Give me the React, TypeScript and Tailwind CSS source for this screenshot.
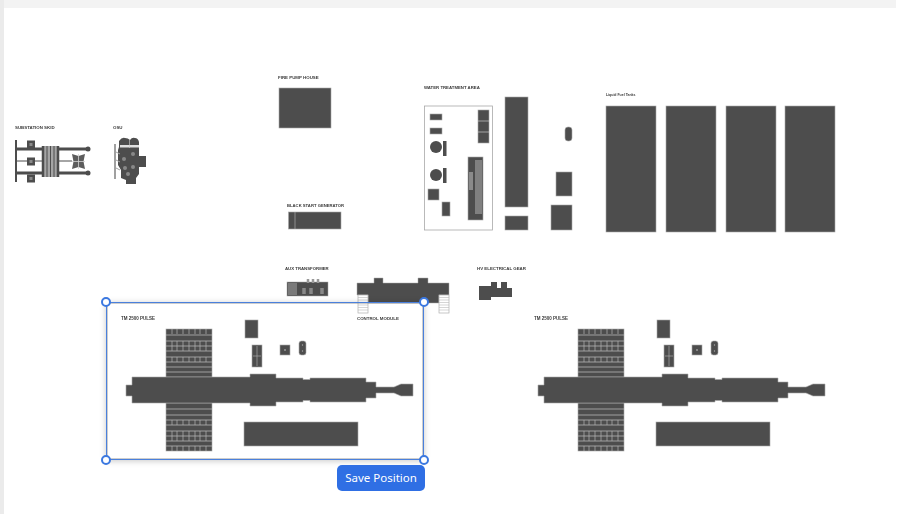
const DARK = '#4d4d4d';
const EDGE = '#a8a8a8';

const labels = [
  { text: 'SUBSTATION SKID', x: 15, y: 125.5, size: 'text-[4.4px]' },
  { text: 'OSU', x: 113, y: 125.5, size: 'text-[4.4px]' },
  { text: 'FIRE PUMP HOUSE', x: 278, y: 75.5, size: 'text-[4.4px]' },
  { text: 'BLACK START GENERATOR', x: 287, y: 203.5, size: 'text-[4.2px]' },
  { text: 'WATER TREATMENT AREA', x: 424, y: 85.5, size: 'text-[4.3px]' },
  { text: 'Liquid Fuel Tanks', x: 606, y: 93.5, size: 'text-[3.5px]' },
  { text: 'AUX TRANSFORMER', x: 285, y: 266.5, size: 'text-[4.3px]' },
  { text: 'HV ELECTRICAL GEAR', x: 477, y: 266.5, size: 'text-[4.4px]' },
  { text: 'CONTROL MODULE', x: 357, y: 316.5, size: 'text-[4.4px]' },
  { text: 'TM 2500 PULSE', x: 121, y: 316.5, size: 'text-[4.5px]' },
  { text: 'TM 2500 PULSE', x: 534, y: 316.5, size: 'text-[4.5px]' },
];

function Box({ x, y, w, h }: { x: number; y: number; w: number; h: number }) {
  return <rect x={x} y={y} width={w} height={h} fill={DARK} stroke={EDGE} strokeWidth={0.6} />;
}

function Fins({ y, cellRows }: { y: number; cellRows: number[] }) {
  return (
    <g>
      <rect x={166} y={y} width={46} height={48} fill={DARK} stroke={EDGE} strokeWidth={0.6} />
      {[6, 12, 17, 22, 28, 33, 38, 43].map((r) => (
        <line key={r} x1={166} x2={212} y1={y + r} y2={y + r} stroke="#b5b5b5" strokeWidth={0.8} />
      ))}
      {cellRows.map((r) =>
        [172, 177, 183, 189, 195, 200, 206].map((cx) => (
          <line key={`${r}-${cx}`} x1={cx} x2={cx} y1={y + r} y2={y + r + 5} stroke="#b5b5b5" strokeWidth={0.7} />
        )),
      )}
    </g>
  );
}

function Pulse({ dx }: { dx: number }) {
  return (
    <g transform={`translate(${dx} 0)`}>
      <Fins y={329} cellRows={[0, 12, 17, 28]} />
      <Fins y={403} cellRows={[17, 28, 33, 43]} />
      <path
        d="M126 385H132V377H250V374H276V378H303V379.500H310V378H366V382H376V387H394L401 384H413V396H401L394 393H376V398H366V402H310V400.500H303V402H276V406H250V403H132V396H126Z"
        fill={DARK}
        stroke={EDGE}
        strokeWidth={0.6}
      />
      <Box x={244} y={422} w={114} h={24} />
      <Box x={245} y={320} w={13} h={18} />
      <Box x={252} y={345} w={10} h={22} />
      <path d="M257 346V366M253 356H261" stroke="#b5b5b5" strokeWidth={0.6} />
      <Box x={280} y={345} w={10} h={10} />
      <circle cx={285} cy={350} r={1} fill="#999" />
      <rect x={299} y={341} width={7} height={14} rx={2.500} fill={DARK} stroke={EDGE} strokeWidth={0.6} />
      <circle cx={302.500} cy={345} r={0.7} fill="#aaa" />
      <circle cx={302.500} cy={351} r={0.7} fill="#aaa" />
    </g>
  );
}

function Substation() {
  return (
    <g>
      <path d="M16 149H88M16 173H88" stroke={DARK} strokeWidth={3} />
      <path d="M16 161H72" stroke={DARK} strokeWidth={1} />
      <path d="M16 140V182" stroke={DARK} strokeWidth={2} />
      <circle cx={88} cy={149} r={2.500} fill={DARK} />
      <circle cx={88} cy={173} r={2.500} fill={DARK} />
      {[140.500, 157.500, 174.500].map((y) => (
        <g key={y}>
          <rect x={27} y={y} width={8} height={8} fill={DARK} />
          <rect x={29.500} y={y + 2.500} width={3} height={3} fill="#8a8a8a" />
        </g>
      ))}
      <rect x={42} y={146} width={17} height={31} fill="#a5a5a5" />
      <path d="M43 146V177M58 146V177" stroke={DARK} strokeWidth={2.500} />
      {[47, 50.500, 54].map((x) => (
        <line key={x} x1={x} x2={x} y1={146} y2={177} stroke={DARK} strokeWidth={1} />
      ))}
      <path d="M72 154L78.500 156L85 154L83.500 161.500L85 169L78.500 167L72 169L73.500 161.500Z" fill="#5c5c5c" />
      <path d="M78.500 154V169M72 161.500H85" stroke="#d0d0d0" strokeWidth={0.8} />
    </g>
  );
}

function Osu() {
  return (
    <g>
      <rect x={114} y={144} width={2} height={35} fill="#a0a0a0" />
      <path
        d="M119 141Q122 137 125 138Q128 138 130 140Q132 137 135 138Q138 138 139 142V156H146V167H139V174L136 178V184H126V180L121 178V170L118 165V150L119 147Z"
        fill={DARK}
      />
      <rect x={120} y={145} width={19} height={2.500} fill="#e0e0e0" />
      <line x1={129.500} x2={129.500} y1={140} y2={148} stroke="#cfcfcf" strokeWidth={0.6} />
      {[
        [124, 159],
        [133, 154],
        [125, 168],
        [133, 167],
        [128, 174],
      ].map(([cx, cy]) => (
        <circle key={`${cx}-${cy}`} cx={cx} cy={cy} r={2} fill="#888" />
      ))}
      <path d="M116 152L120 154M116 160L120 162M116 168L120 170" stroke="#a0a0a0" strokeWidth={1} />
    </g>
  );
}

function WaterTreatment() {
  return (
    <g>
      <rect x={424.500} y={106} width={68} height={124} fill="#fff" stroke="#a8a8a8" strokeWidth={0.8} />
      <Box x={430} y={114} w={12} h={6} />
      <Box x={430} y={128} w={12} h={6} />
      <circle cx={436} cy={147} r={6} fill={DARK} />
      <rect x={443} y={141} width={3.500} height={15} fill={DARK} />
      <circle cx={436} cy={175} r={6} fill={DARK} />
      <rect x={443} y={168} width={3.500} height={15} fill={DARK} />
      <Box x={428} y={189} w={11} h={11} />
      <Box x={442} y={202} w={8} h={14} />
      <Box x={478} y={110} w={11} h={33} />
      <path d="M478 121H489M478 132H489" stroke="#c8c8c8" strokeWidth={0.7} />
      <Box x={468} y={157} w={15} h={63} />
      <rect x={475} y={160} width={7} height={54} fill="#808080" />
      <rect x={469} y={172} width={4} height={18} fill="#8a8a8a" />
      <Box x={505} y={97} w={23} h={110} />
      <Box x={505} y={216} w={23} h={14} />
      <rect x={565} y={127} width={7} height={14} rx={3} fill={DARK} stroke={EDGE} strokeWidth={0.6} />
      <Box x={556} y={172} w={16} h={24} />
      <Box x={551} y={205} w={21} h={25} />
    </g>
  );
}

function ControlModule() {
  return (
    <g>
      <path d="M357 283H374V278H383V283H418V278H428V283H449V295H439V303H368V295H357Z" fill={DARK} stroke={EDGE} strokeWidth={0.5} />
      {[358, 439].map((x) => (
        <g key={x}>
          <rect x={x} y={295} width={10} height={18} fill="#fff" stroke="#b0b0b0" strokeWidth={0.7} />
          {[297.500, 300, 302.500, 305, 307.500, 310].map((y) => (
            <line key={y} x1={x} x2={x + 10} y1={y} y2={y} stroke="#b8b8b8" strokeWidth={0.6} />
          ))}
        </g>
      ))}
    </g>
  );
}

function SitePlan() {
  return (
    <svg width={900} height={514} viewBox="0 0 900 514" className="absolute inset-0 blur-[0.5px]">
      <Substation />
      <Osu />
      <Box x={279} y={88} w={52} h={40} />
      <Box x={288.500} y={212} w={52.500} h={17} />
      <line x1={295} x2={295} y1={212} y2={229} stroke="#aaa" strokeWidth={0.7} />
      <WaterTreatment />
      {[606, 666, 726, 785].map((x) => (
        <Box key={x} x={x} y={106} w={50} h={126} />
      ))}
      <rect x={287} y={282} width={41} height={14} fill={DARK} stroke={EDGE} strokeWidth={0.5} />
      <rect x={288} y={283} width={9} height={12} fill="#7a7a7a" />
      <path d="M304 288V294M311 288V294M322 288V294" stroke="#888" strokeWidth={3.500} />
      <path d="M308 279V283M313 279V283M318 279V283" stroke="#999" strokeWidth={2.500} />
      <ControlModule />
      <path d="M479 286H491V282H497V288H501V282H507V288H512V297H491V300H479Z" fill={DARK} />
      <Pulse dx={0} />
      <Pulse dx={412} />
    </svg>
  );
}

function Handle({ pos }: { pos: string }) {
  return <span className={`absolute size-[10px] rounded-full border-2 border-[#3b78e0] bg-white ${pos}`} />;
}

export default function App() {
  return (
    <div className="relative h-[514px] w-[900px] overflow-hidden bg-white" style={{ fontFamily: '"Liberation Sans", sans-serif' }}>
      <div className="absolute left-0 top-0 h-2 w-[896px] bg-[#f3f3f3]" />
      <div className="absolute left-0 top-0 h-full w-[4px] bg-[#ebebeb]" />

      <SitePlan />

      {labels.map((l) => (
        <span
          key={`${l.text}-${l.x}`}
          className={`absolute whitespace-nowrap font-bold leading-none text-[#3a3a3a] blur-[0.25px] ${l.size}`}
          style={{ left: l.x, top: l.y }}
        >
          {l.text}
        </span>
      ))}

      {/* selected item */}
      <div className="absolute left-[106px] top-[302px] h-[158px] w-[318px] border-[1.5px] border-[#4a80dc] shadow-[0_1px_6px_rgba(0,0,0,0.22),inset_0_0_0_1px_rgba(130,130,130,0.4)]">
        <Handle pos="-left-[6px] -top-[6px]" />
        <Handle pos="-right-[6px] -top-[6px]" />
        <Handle pos="-left-[6px] -bottom-[6px]" />
        <Handle pos="-right-[6px] -bottom-[6px]" />
      </div>

      <button
        className="absolute left-[337px] top-[465px] flex h-[26px] w-[88px] items-center justify-center rounded-[5px] bg-[#2f6fe4] text-[11.5px] text-white"
        style={{ fontFamily: '"Noto Sans", sans-serif' }}
      >
        Save Position
      </button>
    </div>
  );
}
